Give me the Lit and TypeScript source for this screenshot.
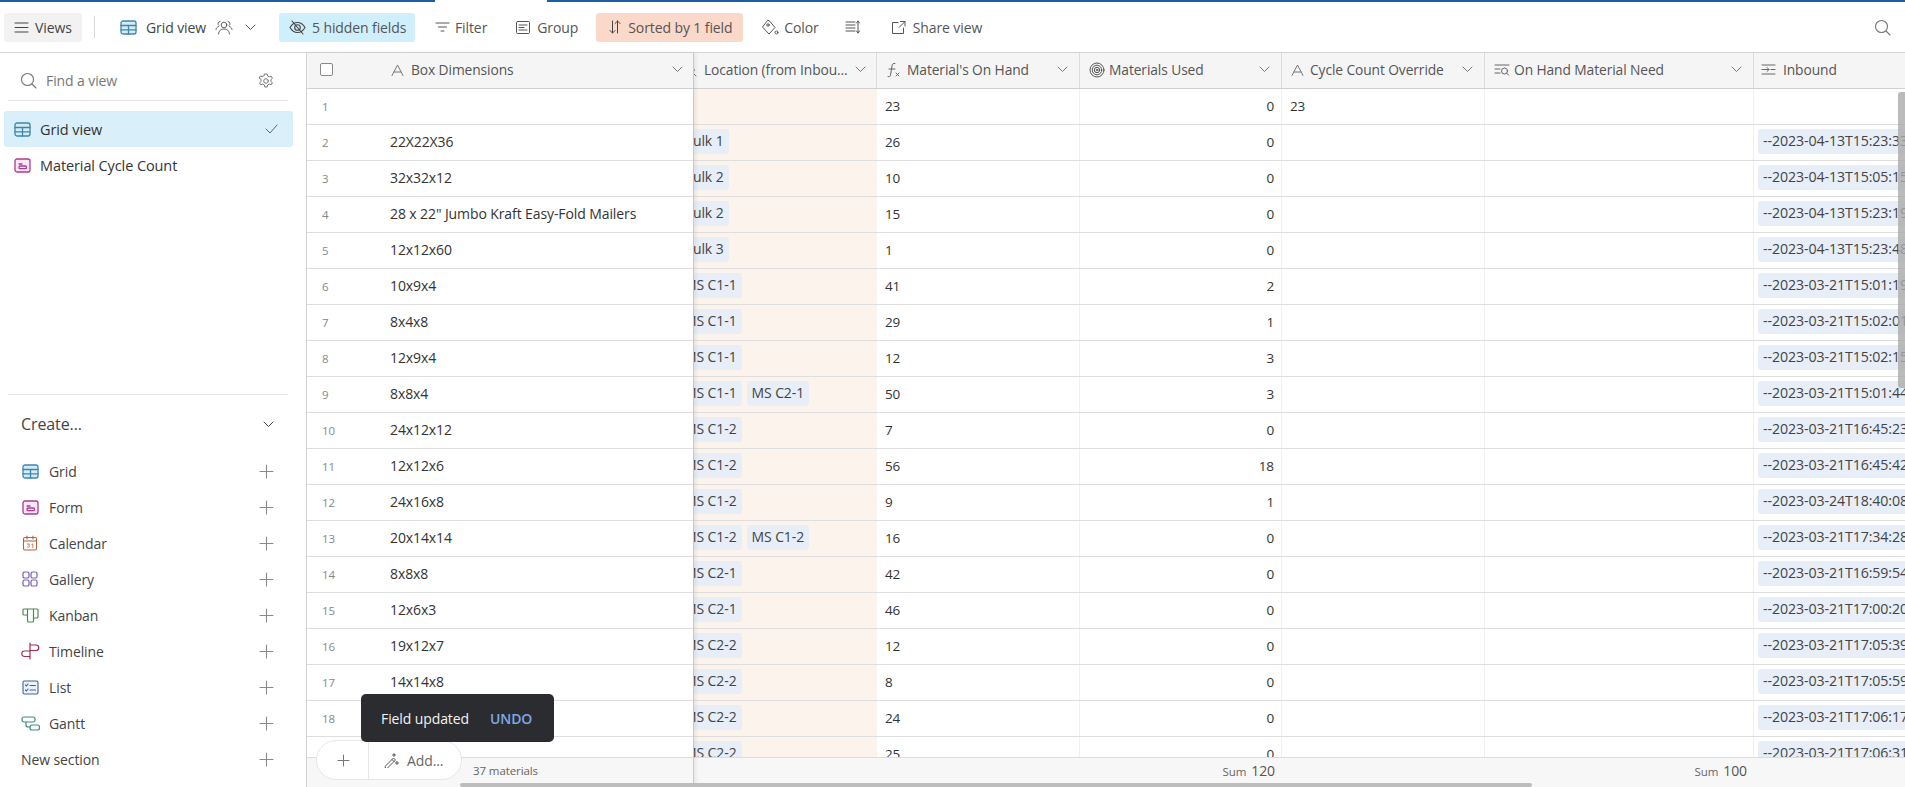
import { LitElement, html, css, svg } from "lit";
import { customElement } from "lit/decorators.js";

const ic = (w: number, h: number, body: unknown, stroke = "#555", sw = 1) => html`<svg class="ic" width=${w} height=${h} viewBox="0 0 ${w} ${h}" fill="none" stroke=${stroke} stroke-width=${sw} stroke-linecap="round" stroke-linejoin="round">${body}</svg>`;

const gridIc = () => ic(17, 15, svg`<rect x="1" y="1" width="15" height="13" rx="2" fill="#d3ecf8"/><path d="M1 5.500h15M1 9.800h15M8.500 5.500V14"/>`, "#3f86ad", 1.3);
const formIc = () => ic(17, 15, svg`<rect x="1" y="1" width="15" height="13" rx="2" fill="#fbe6f5"/><path d="M5 6h3"/><rect x="5" y="8" width="7.500" height="2.600" rx="1.200"/>`, "#a83e8f", 1.3);
const calIc = () => ic(16, 16, svg`<rect x="1.500" y="2.500" width="13" height="12.500" rx="1.500"/><path d="M1.500 6h13M5 1v3M11 1v3"/><path d="M5.500 9h2l-1 1.200q1.200.3 1 1.300t-2 .5M9.800 9.500l1-.6v3.800" stroke-width=".8"/>`, "#b1643a", 1.1);
const galIc = () => ic(16, 16, svg`<rect x="1" y="1" width="6" height="6" rx="1.600"/><rect x="9" y="1" width="6" height="6" rx="1.600"/><rect x="1" y="9" width="6" height="6" rx="1.600"/><rect x="9" y="9" width="6" height="6" rx="1.600"/>`, "#7a5fb0", 1.2);
const kanIc = () => ic(17, 15, svg`<path d="M5.500 1H2a1 1 0 0 0-1 1v4a1 1 0 0 0 1 1h3.500M5.500 1h6v12a1 1 0 0 1-1 1h-4a1 1 0 0 1-1-1zM11.500 1H15a1 1 0 0 1 1 1v7a1 1 0 0 1-1 1h-3.500"/>`, "#4f8a4c", 1.2);
const timeIc = () => ic(19, 18, svg`<path d="M9 1v16M9 3h6a2.500 2.500 0 0 1 0 5.500H9M9 9H3.500a2.500 2.500 0 0 0 0 5.500H9"/>`, "#a52a55", 1.2);
const listIc = () => ic(17, 15, svg`<rect x="1" y="1" width="15" height="13" rx="1.500" fill="#eef2fb"/><path d="M3.500 5l1 1 1.500-2M3.500 10l1 1 1.500-2M8 5.500h5.500M8 10h5.500"/>`, "#3a62a8", 1.1);
const ganttIc = () => ic(19, 15, svg`<rect x="1" y="1" width="13" height="5" rx="2"/><rect x="9" y="9" width="9.500" height="5" rx="2"/><path d="M5 6v3a2 2 0 0 0 2 2h2"/>`, "#3f8c80", 1.2);
const chev = (c = "#777") => ic(11, 7, svg`<path d="M1 1l4.500 4.500L10 1"/>`, c, 1);
const plus = () => ic(15, 15, svg`<path d="M7.500 1v13M1 7.500h13"/>`, "#8a8a8a", 1.1);
const search = () => ic(17, 17, svg`<circle cx="7.500" cy="7.500" r="6"/><path d="M12 12l4 4"/>`, "#777", 1.1);
const textIc = () => ic(13, 12, svg`<path d="M1 11.500L6.500 1 12 11.500M3 8h7"/>`, "#777", 1);

const rows: [string, string[], string, string, string, string][] = [
  ["", [], "23", "0", "23", ""],
  ["22X22X36", ["Bulk 1"], "26", "0", "", "--2023-04-13T15:23:33"],
  ["32x32x12", ["Bulk 2"], "10", "0", "", "--2023-04-13T15:05:15"],
  ['28 x 22" Jumbo Kraft Easy-Fold Mailers', ["Bulk 2"], "15", "0", "", "--2023-04-13T15:23:19"],
  ["12x12x60", ["Bulk 3"], "1", "0", "", "--2023-04-13T15:23:48"],
  ["10x9x4", ["MS C1-1"], "41", "2", "", "--2023-03-21T15:01:19"],
  ["8x4x8", ["MS C1-1"], "29", "1", "", "--2023-03-21T15:02:01"],
  ["12x9x4", ["MS C1-1"], "12", "3", "", "--2023-03-21T15:02:15"],
  ["8x8x4", ["MS C1-1", "MS C2-1"], "50", "3", "", "--2023-03-21T15:01:44"],
  ["24x12x12", ["MS C1-2"], "7", "0", "", "--2023-03-21T16:45:23"],
  ["12x12x6", ["MS C1-2"], "56", "18", "", "--2023-03-21T16:45:42"],
  ["24x16x8", ["MS C1-2"], "9", "1", "", "--2023-03-24T18:40:08"],
  ["20x14x14", ["MS C1-2", "MS C1-2"], "16", "0", "", "--2023-03-21T17:34:28"],
  ["8x8x8", ["MS C2-1"], "42", "0", "", "--2023-03-21T16:59:54"],
  ["12x6x3", ["MS C2-1"], "46", "0", "", "--2023-03-21T17:00:20"],
  ["19x12x7", ["MS C2-2"], "12", "0", "", "--2023-03-21T17:05:39"],
  ["14x14x8", ["MS C2-2"], "8", "0", "", "--2023-03-21T17:05:59"],
  ["", ["MS C2-2"], "24", "0", "", "--2023-03-21T17:06:17"],
  ["", ["MS C2-2"], "25", "0", "", "--2023-03-21T17:06:31"],
];

const creators: [string, () => unknown][] = [
  ["Grid", gridIc], ["Form", formIc], ["Calendar", calIc], ["Gallery", galIc],
  ["Kanban", kanIc], ["Timeline", timeIc], ["List", listIc], ["Gantt", ganttIc],
];

@customElement("app-root")
export class AppRoot extends LitElement {
  static styles = css`
    :host { display: flex; flex-direction: column; height: 787px; width: 1905px; overflow: hidden; background: #fff;
      font-family: "Open Sans", "Noto Sans", sans-serif; font-size: 14px; color: #333; letter-spacing: -0.1px; }
    .ic { flex: none; display: block; }
    .topline { display: flex; height: 2px; flex: none; }
    .topline i { background: #1f5fa8; }
    .tl1 { width: 435px; } .tl2 { width: 112px; background: transparent !important; } .tl3 { flex: 1; }

    .toolbar { flex: none; display: flex; align-items: center; padding-left: 4px; border-bottom: 1px solid #d4d4d4; height: 50px; font-size: 14px; color: #555; }
    .tb { display: flex; align-items: center; height: 29px; border-radius: 3px; white-space: nowrap; }
    .views { width: 78px; background: #f2f2f2; padding-left: 10px; gap: 6px; box-sizing: border-box; color: #444; }
    .vdiv { width: 1px; height: 22px; background: #d8d8d8; margin: 0 25px 0 12px; }
    .vname { gap: 9px; color: #444; font-weight: 500; }
    .vname .cvw { margin-left: 3px; }
    .hidden-f { width: 136px; background: #d0effc; margin-left: 23px; padding-left: 10px; gap: 6px; box-sizing: border-box; }
    .filter { margin-left: 20px; gap: 5px; }
    .group { margin-left: 29px; gap: 7px; }
    .sorted { width: 147px; background: #fbd9ca; margin-left: 18px; padding-left: 13px; gap: 7px; box-sizing: border-box; }
    .color { margin-left: 18px; gap: 5px; }
    .rh { margin-left: 26px; }
    .share { margin-left: 30px; gap: 7px; }
    .tsearch { margin-left: auto; margin-right: 14px; }

    .main { flex: 1; min-height: 0; display: flex; }
    .side { width: 307px; flex: none; box-sizing: border-box; border-right: 1px solid #d4d4d4; display: flex; flex-direction: column; padding: 0 13px 10px 4px; }
    .find { height: 48px; flex: none; margin: 0 5px 0 4px; display: flex; align-items: center; padding: 8px 6px 0 12px; gap: 9px; box-sizing: border-box; border-bottom: 1px solid #e4e4e4; color: #777; font-size: 14px; }
    .find .gear { margin-left: auto; margin-right: 8px; }
    .vitem { height: 36px; display: flex; align-items: center; gap: 9px; padding-left: 10px; border-radius: 3px; font-weight: 500; color: #333; font-size: 14.500px; }
    .vitem.sel { background: #d9eff9; margin-top: 10px; }
    .vitem .ck { margin-left: auto; margin-right: 15px; }
    .spacer { flex: 1; }
    .create { border-top: 1px solid #e4e4e4; margin: 0 5px 0 4px; }
    .chead { height: 58px; display: flex; align-items: center; justify-content: space-between; padding: 0 14px 0 13px; font-size: 16px; font-weight: 500; color: #444; }
    .citem { height: 36px; display: flex; align-items: center; gap: 9px; padding: 0 14px 0 14px; color: #444; font-size: 14px; }
    .icw { width: 20px; display: flex; justify-content: center; flex: none; margin-left: -2px; }
    .citem .pl { margin-left: auto; }
    .citem.news { padding-left: 13px; font-weight: 500; }

    .table { flex: 1; min-width: 0; display: flex; position: relative; }
    .frozen { width: 387px; flex: none; display: flex; flex-direction: column; border-right: 1px solid #c8c8c8; box-sizing: border-box; box-shadow: 2px 0 4px rgba(0,0,0,.07); background: #fff; z-index: 1; }
    .scroll { flex: 1; min-width: 0; overflow: hidden; display: flex; flex-direction: column; }
    .hrow { height: 36px; flex: none; box-sizing: border-box; background: #f5f5f5; border-bottom: 1px solid #d0d0d0; padding-bottom: 2px; display: flex; align-items: center; color: #555; font-size: 13.800px; }
    .body { flex: 1; min-height: 0; overflow: hidden; }
    .foot { height: 30px; flex: none; box-sizing: border-box; background: #f7f7f7; border-top: 1px solid #dcdcdc; padding: 0 0 4px 166px; display: flex; align-items: center; font-size: 11.500px; color: #666; }
    .row { height: 36px; box-sizing: border-box; border-bottom: 1px solid #dedede; padding-bottom: 2px; display: flex; align-items: center; white-space: nowrap; }
    .num { width: 83px; flex: none; padding-left: 15px; box-sizing: border-box; color: #888; font-size: 11.500px; padding-top: 2px; }
    .chk { width: 11px; height: 11px; border: 1px solid #888; border-radius: 2px; margin-left: 13px; margin-right: 58px; background: #fff; }
    .lab { margin-left: 7px; }
    .fcv { margin-left: auto; margin-right: 10px; }

    .gridw { flex: 1; min-height: 0; overflow: hidden; margin-left: -20px; display: grid; grid-template-columns: 203px 203px 202px 203px 269px 400px; grid-template-rows: 36px 1fr 30px; width: max-content; }
    .hline { grid-column: 1 / -1; display: grid; grid-template-columns: subgrid; height: 36px; box-sizing: border-box; border-bottom: 1px solid #dedede; }
    .hline.h { background: #f5f5f5; border-bottom-color: #d0d0d0; color: #555; font-size: 13.800px; }
    .hcell { display: flex; align-items: center; gap: 6px; padding: 0 11px 2px 9px; box-sizing: border-box; height: 35px; border-right: 1px solid #dcdcdc; min-width: 0; white-space: nowrap; }
    .hcell.lc { padding-left: 7px; gap: 7px; }
    .hcell.tight { gap: 4px; }
    .hcell.last { border-right: 0; padding-left: 7px; gap: 7px; }
    .hcell .cv { margin-left: auto; }
    .cell { box-sizing: border-box; height: 35px; border-right: 1px solid #f0f0f0; display: flex; align-items: center; padding: 0 7px 2px 8px; overflow: hidden; white-space: nowrap; font-size: 13.500px; }
    .cell.loc { background: #fdf3ed; padding: 4px 0 6px 5px; gap: 5px; border-right: 0; font-size: 14px; }
    .cell.r { justify-content: flex-end; }
    .cell.inb { padding: 4px 0 6px 4px; border-right: 0; overflow: visible; font-size: 14.200px; }
    .chip { height: 25px; box-sizing: border-box; display: flex; align-items: center; padding: 0 5px 2px; background: #e7eef8; border-radius: 3px; flex: none; color: #444; }
    .bodyw { grid-column: 1 / -1; display: grid; grid-template-columns: subgrid; grid-auto-rows: 36px; min-height: 0; overflow: hidden; }
    .footw { grid-column: 1 / -1; display: grid; grid-template-columns: subgrid; align-items: center; height: 30px; box-sizing: border-box; background: #f7f7f7; border-top: 1px solid #dcdcdc; padding-bottom: 4px; font-size: 11.500px; color: #666; }
    .sum { display: flex; justify-content: flex-end; align-items: baseline; gap: 5px; padding-right: 7px; }
    .sum b { font-weight: 400; font-size: 14px; color: #555; }
    .c3 { grid-column: 3; } .c5 { grid-column: 5; }

    .vbar { position: absolute; right: 0; top: 39px; width: 7px; height: 296px; background: rgba(170,170,170,.8); border-radius: 3px 0 0 3px; z-index: 2; }
    .hbar { position: absolute; left: 153px; bottom: 0; width: 1072px; height: 4px; background: #bdbdbd; border-radius: 3px; z-index: 2; }
    .toast { position: absolute; left: 54px; top: 641px; width: 193px; height: 48px; box-sizing: border-box; background: #2b2c30; border-radius: 5px; color: #f2f2f2; display: flex; align-items: center; padding-left: 20px; gap: 21px; z-index: 4; font-size: 14px; }
    .toast b { color: #7fa7e6; font-weight: 600; }
    .pill { position: absolute; left: 9px; top: 687px; width: 146px; height: 40px; box-sizing: border-box; background: #fff; border: 1px solid #e6e6e6; border-radius: 20px; display: flex; align-items: center; z-index: 3; color: #666; font-size: 14px; }
    .pill .a { width: 52px; height: 100%; border-right: 1px solid #e6e6e6; display: flex; align-items: center; justify-content: center; box-sizing: border-box; padding-left: 2px; }
    .pill .b { display: flex; align-items: center; gap: 8px; padding-left: 14px; }
  `;

  render() {
    return html`
      <div class="topline"><i class="tl1"></i><i class="tl2"></i><i class="tl3"></i></div>
      <div class="toolbar">
        <div class="tb views">${ic(15, 11, svg`<path d="M1 1h13M1 5.500h13M1 10h13"/>`, "#444")}Views</div>
        <div class="vdiv"></div>
        <div class="tb vname">${gridIc()}<span>Grid view</span>${ic(18, 15, svg`<circle cx="9" cy="5" r="2.800"/><path d="M3.500 14c.5-3.500 2.500-5 5.500-5s5 1.500 5.500 5M5 1.500a2.200 2.200 0 0 0-1 4M13 1.500a2.200 2.200 0 0 1 1 4M1 9.500c.3-1.500 1-2.500 2.500-3M17 9.500c-.3-1.500-1-2.500-2.500-3"/>`, "#555", .9)}<span class="cvw">${chev("#555")}</span></div>
        <div class="tb hidden-f">${ic(17, 15, svg`<path d="M1 7.500C3 4 5.500 2.500 8.500 2.500S14 4 16 7.500C14 11 11.500 12.500 8.500 12.500S3 11 1 7.500z"/><circle cx="8.500" cy="7.500" r="2.800"/><path d="M3 1l11 13"/>`, "#444", 1.1)}5 hidden fields</div>
        <div class="tb filter">${ic(15, 10, svg`<path d="M1 1h13M3.500 5h8M6 9h3"/>`, "#555")}Filter</div>
        <div class="tb group">${ic(14, 13, svg`<rect x=".5" y=".5" width="13" height="12" rx="1"/><path d="M3 4h8M3 6.500h5M3 9h8"/>`, "#555")}Group</div>
        <div class="tb sorted">${ic(12, 14, svg`<path d="M3.500 1v12M1 10.500L3.500 13 6 10.500M8.500 13V1M6 3.500L8.500 1 11 3.500"/>`, "#444")}Sorted by 1 field</div>
        <div class="tb color">${ic(18, 17, svg`<path d="M6.500 1.500L1.500 8l6.500 7 6-6.500L9 2.500z"/><circle cx="7" cy="6" r="1.200"/><circle cx="15.500" cy="13.500" r="1.500"/>`, "#555")}Color</div>
        <div class="tb rh">${ic(16, 14, svg`<path d="M1 2h9M1 5h9M1 8h9M1 11h9M13 1v12M11.500 3L13 1l1.500 2M11.500 11L13 13l1.500-2"/>`, "#555")}</div>
        <div class="tb share">${ic(15, 15, svg`<path d="M7 2.500H1.500v11h11V8M8 7.500L14 1.500M9.500 1.500H14V6"/>`, "#555")}Share view</div>
        <div class="tsearch">${search()}</div>
      </div>
      <div class="main">
        <aside class="side">
          <div class="find">${search()}<span>Find a view</span><span class="gear">${ic(16, 16, svg`<circle cx="8" cy="8" r="2.300"/><path d="M6.800 1h2.400l.4 2 1.700.9 1.900-.7 1.200 2.100-1.500 1.300v1.800l1.500 1.300-1.200 2.100-1.900-.7-1.700.9-.4 2H6.800l-.4-2-1.700-.9-1.900.7-1.200-2.100 1.500-1.300V6.300L1.100 5l1.200-2.100 1.900.7 1.700-.9z"/>`, "#777", 1)}</span></div>
          <div class="vitem sel">${gridIc()}<span>Grid view</span><span class="ck">${ic(13, 10, svg`<path d="M1 5l4 4 7-8"/>`, "#666")}</span></div>
          <div class="vitem">${formIc()}<span>Material Cycle Count</span></div>
          <div class="spacer"></div>
          <div class="create">
            <div class="chead"><span>Create...</span>${chev("#444")}</div>
            ${creators.map(([n, f]) => html`<div class="citem"><span class="icw">${f()}</span><span>${n}</span><span class="pl">${plus()}</span></div>`)}
            <div class="citem news"><span>New section</span><span class="pl">${plus()}</span></div>
          </div>
        </aside>
        <section class="table">
          <div class="frozen">
            <div class="hrow"><span class="chk"></span>${textIc()}<span class="lab">Box Dimensions</span><span class="fcv">${chev()}</span></div>
            <div class="body">${rows.map((r, i) => html`<div class="row"><span class="num">${i + 1}</span><span>${r[0]}</span></div>`)}</div>
            <div class="foot">37 materials</div>
          </div>
          <div class="scroll">
            <div class="gridw">
              <div class="hline h">
                <div class="hcell lc">${ic(16, 14, svg`<circle cx="9" cy="7" r="4"/><path d="M12 10l3 3M1 3h5M1 7h3M1 11h5"/>`, "#777")}<span>Location (from Inbou...</span><span class="cv">${chev()}</span></div>
                <div class="hcell">${ic(15, 16, svg`<path d="M9 1.500C7 1 6.300 2 6 4L4.500 13c-.3 1.500-1 2-2.500 1.500M3 7h6M10 11l3 3M13 11l-3 3"/>`, "#666")}<span>Material's On Hand</span><span class="cv">${chev()}</span></div>
                <div class="hcell tight">${ic(16, 16, svg`<circle cx="8" cy="8" r="7"/><circle cx="8" cy="8" r="4.800"/><circle cx="8" cy="8" r="2.700"/><circle cx="8" cy="8" r=".8"/>`, "#555", 1)}<span>Materials Used</span><span class="cv">${chev()}</span></div>
                <div class="hcell">${textIc()}<span>Cycle Count Override</span><span class="cv">${chev()}</span></div>
                <div class="hcell tight">${ic(16, 13, svg`<path d="M1 2h14M1 6h5M1 10h5"/><circle cx="10.500" cy="8" r="3"/><path d="M12.700 10.200l2 2"/>`, "#666")}<span>On Hand Material Need</span><span class="cv">${chev()}</span></div>
                <div class="hcell last">${ic(15, 11, svg`<path d="M1 1h13M1 10h13M1 5.500h7M6 3.500l2 2-2 2M10 5.500h4"/>`, "#666")}<span>Inbound</span></div>
              </div>
              <div class="bodyw">
                ${rows.map((r) => html`<div class="hline">
                  <div class="cell loc">${r[1].map((c) => html`<span class="chip">${c}</span>`)}</div>
                  <div class="cell">${r[2]}</div>
                  <div class="cell r">${r[3]}</div>
                  <div class="cell">${r[4]}</div>
                  <div class="cell"></div>
                  <div class="cell inb">${r[5] ? html`<span class="chip">${r[5]}</span>` : ""}</div>
                </div>`)}
              </div>
              <div class="footw">
                <div class="sum c3"><span>Sum</span><b>120</b></div>
                <div class="sum c5"><span>Sum</span><b>100</b></div>
              </div>
            </div>
          </div>
          <div class="vbar"></div>
          <div class="hbar"></div>
          <div class="pill"><div class="a">${ic(13, 13, svg`<path d="M6.500 1v11M1 6.500h11"/>`, "#777")}</div><div class="b">${ic(16, 16, svg`<path d="M2 14.500L10.500 6l2 2L4 16.500zM9 7.500l2 2M11 1.500v3M9.500 3h3M14 9.500v3M12.500 11h3"/>`, "#555")}<span>Add...</span></div></div>
          <div class="toast"><span>Field updated</span><b>UNDO</b></div>
        </section>
      </div>
    `;
  }
}
